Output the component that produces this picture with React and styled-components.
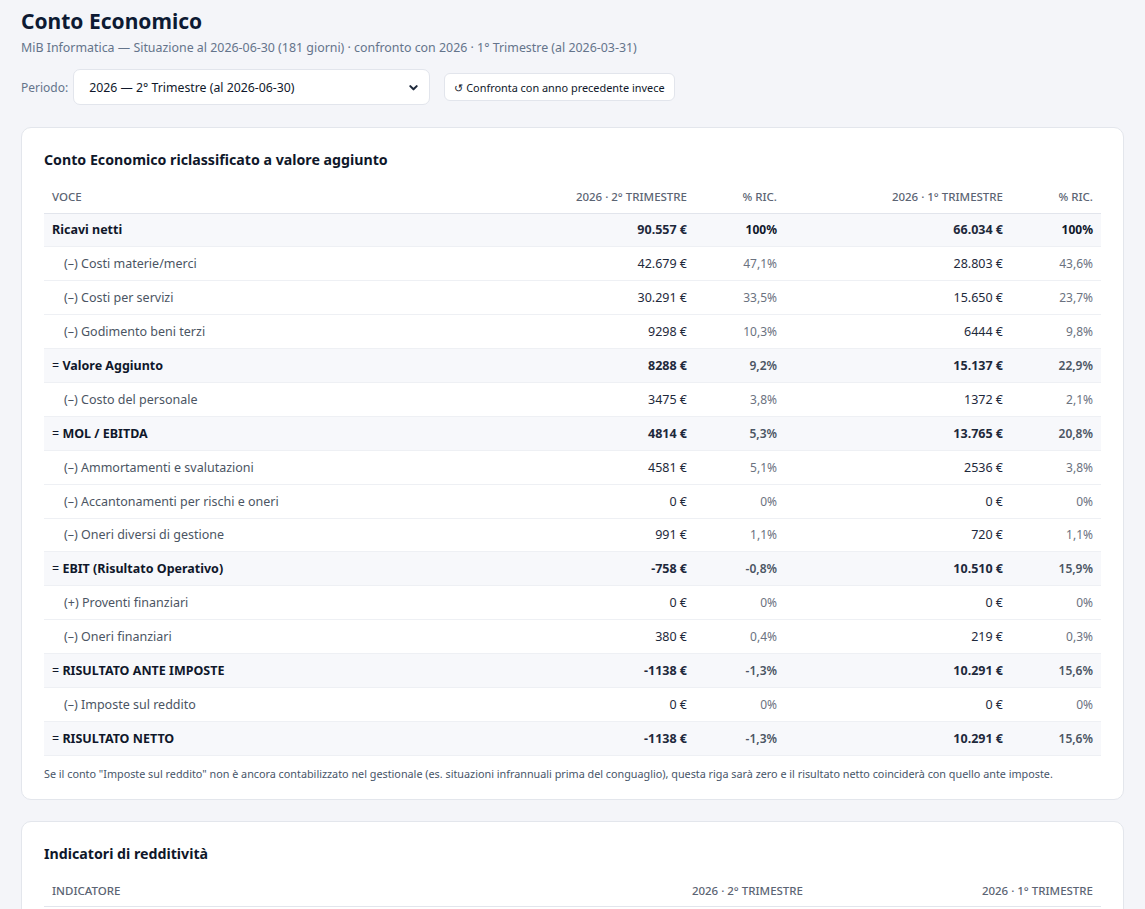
import React from "react";
import styled, { createGlobalStyle } from "styled-components";

const Global = createGlobalStyle`
  html, body { margin: 0; padding: 0; background: #f4f5f9; }
  body { font-family: "Noto Sans", "Open Sans", sans-serif; color: #0f172a; }
  * { box-sizing: border-box; }
`;

const Page = styled.div`
  padding: 6px 21px 20px 21px;
`;

const Title = styled.h1`
  margin: 0;
  font-size: 21px;
  font-weight: 700;
  color: #0d1a33;
  line-height: 30px;
`;

const Subtitle = styled.div`
  margin-top: 3px;
  font-size: 12.4px;
  color: #64748b;
  line-height: 18px;
`;

const Toolbar = styled.div`
  display: flex;
  align-items: center;
  gap: 5px;
  margin-top: 12px;
`;

const Label = styled.span`
  font-size: 12px;
  color: #64748b;
`;

const SelectBox = styled.div`
  width: 357px;
  height: 36px;
  border: 1px solid #e2e5ec;
  border-radius: 7px;
  background: #fff;
  display: flex;
  align-items: center;
  padding: 0 10px 0 15px;
  font-size: 12.3px;
  color: #0f172a;
  justify-content: space-between;
`;

const Button = styled.button`
  margin-left: 9px;
  height: 28px;
  padding: 0 9px;
  border: 1px solid #e2e5ec;
  border-radius: 6px;
  background: #fff;
  font-family: inherit;
  font-size: 10.9px;
  color: #0f172a;
  display: flex;
  align-items: center;
  gap: 3px;
`;

const Card = styled.section`
  margin-top: ${(p) => p.$mt || 22}px;
  background: #fff;
  border: 1px solid #e3e6ec;
  border-radius: 10px;
  padding: 21px 22px 17px 22px;
`;

const CardTitle = styled.h2`
  margin: 0 0 10px 0;
  font-size: 14.2px;
  font-weight: 700;
  color: #0f172a;
  line-height: 22px;
`;

const Table = styled.table`
  width: 100%;
  border-collapse: collapse;
  table-layout: fixed;
`;

const Th = styled.th`
  font-size: 11.5px;
  font-weight: 500;
  color: #5b6473;
  text-transform: uppercase;
  text-align: ${(p) => (p.$left ? "left" : "right")};
  padding: 0 8px;
  height: 32px;
  border-bottom: 1px solid #e2e5ec;
`;

const Tr = styled.tr`
  background: ${(p) => (p.$total ? "#f7f8fb" : "#fff")};
  & > td { border-bottom: 1px solid #eef0f4; }
`;

const TdLabel = styled.td`
  height: 33.9px;
  padding: 0 8px 0 ${(p) => (p.$indent ? 20 : 8)}px;
  font-size: 12.5px;
  color: ${(p) => (p.$total ? "#0f172a" : "#4b5563")};
  white-space: nowrap;
`;

const Strong = styled.strong`
  font-weight: 700;
  color: #0f172a;
`;

const TdVal = styled.td`
  padding: 0 8px;
  text-align: right;
  font-size: 12.5px;
  font-weight: ${(p) => (p.$total ? 700 : 400)};
  color: #1e293b;
  white-space: nowrap;
`;

const TdPct = styled.td`
  padding: 0 8px;
  text-align: right;
  font-size: 12px;
  font-weight: ${(p) => (p.$strong ? 700 : p.$total ? 600 : 400)};
  color: ${(p) => (p.$strong ? "#0f172a" : p.$total ? "#4b5563" : "#6b7280")};
  white-space: nowrap;
`;

const Note = styled.p`
  margin: 10px 0 0 0;
  font-size: 10.8px;
  color: #475569;
  line-height: 16px;
`;

const rows = [
  { l: "Ricavi netti", a: "90.557 €", ap: "100%", b: "66.034 €", bp: "100%", t: true, first: true },
  { l: "(–) Costi materie/merci", a: "42.679 €", ap: "47,1%", b: "28.803 €", bp: "43,6%" },
  { l: "(–) Costi per servizi", a: "30.291 €", ap: "33,5%", b: "15.650 €", bp: "23,7%" },
  { l: "(–) Godimento beni terzi", a: "9298 €", ap: "10,3%", b: "6444 €", bp: "9,8%" },
  { l: "Valore Aggiunto", a: "8288 €", ap: "9,2%", b: "15.137 €", bp: "22,9%", t: true },
  { l: "(–) Costo del personale", a: "3475 €", ap: "3,8%", b: "1372 €", bp: "2,1%" },
  { l: "MOL / EBITDA", a: "4814 €", ap: "5,3%", b: "13.765 €", bp: "20,8%", t: true },
  { l: "(–) Ammortamenti e svalutazioni", a: "4581 €", ap: "5,1%", b: "2536 €", bp: "3,8%" },
  { l: "(–) Accantonamenti per rischi e oneri", a: "0 €", ap: "0%", b: "0 €", bp: "0%" },
  { l: "(–) Oneri diversi di gestione", a: "991 €", ap: "1,1%", b: "720 €", bp: "1,1%" },
  { l: "EBIT (Risultato Operativo)", a: "-758 €", ap: "-0,8%", b: "10.510 €", bp: "15,9%", t: true },
  { l: "(+) Proventi finanziari", a: "0 €", ap: "0%", b: "0 €", bp: "0%" },
  { l: "(–) Oneri finanziari", a: "380 €", ap: "0,4%", b: "219 €", bp: "0,3%" },
  { l: "RISULTATO ANTE IMPOSTE", a: "-1138 €", ap: "-1,3%", b: "10.291 €", bp: "15,6%", t: true },
  { l: "(–) Imposte sul reddito", a: "0 €", ap: "0%", b: "0 €", bp: "0%" },
  { l: "RISULTATO NETTO", a: "-1138 €", ap: "-1,3%", b: "10.291 €", bp: "15,6%", t: true },
];

const Chevron = () => (
  <svg width="11" height="11" viewBox="0 0 24 24" fill="none" stroke="#1e293b" strokeWidth="4.5" strokeLinecap="round" strokeLinejoin="round">
    <path d="M5 9l7 7 7-7" />
  </svg>
);

export default function App() {
  return (
    <>
      <Global />
      <Page>
        <Title>Conto Economico</Title>
        <Subtitle>
          MiB Informatica — Situazione al 2026-06-30 (181 giorni) · confronto con 2026 · 1° Trimestre (al 2026-03-31)
        </Subtitle>
        <Toolbar>
          <Label>Periodo:</Label>
          <SelectBox>
            <span>2026 — 2° Trimestre (al 2026-06-30)</span>
            <Chevron />
          </SelectBox>
          <Button>
            <span>↺</span>
            <span>Confronta con anno precedente invece</span>
          </Button>
        </Toolbar>

        <Card $mt={22}>
          <CardTitle>Conto Economico riclassificato a valore aggiunto</CardTitle>
          <Table>
            <colgroup>
              <col />
              <col style={{ width: 226 }} />
              <col style={{ width: 90 }} />
              <col style={{ width: 226 }} />
              <col style={{ width: 90 }} />
            </colgroup>
            <thead>
              <tr>
                <Th $left>Voce</Th>
                <Th>2026 · 2° Trimestre</Th>
                <Th>% Ric.</Th>
                <Th>2026 · 1° Trimestre</Th>
                <Th>% Ric.</Th>
              </tr>
            </thead>
            <tbody>
              {rows.map((r) => (
                <Tr key={r.l} $total={r.t}>
                  <TdLabel $indent={!r.t} $total={r.t}>
                    {r.t ? (
                      r.first ? (
                        <Strong>{r.l}</Strong>
                      ) : (
                        <>
                          = <Strong>{r.l}</Strong>
                        </>
                      )
                    ) : (
                      r.l
                    )}
                  </TdLabel>
                  <TdVal $total={r.t}>{r.a}</TdVal>
                  <TdPct $total={r.t} $strong={r.first}>{r.ap}</TdPct>
                  <TdVal $total={r.t}>{r.b}</TdVal>
                  <TdPct $total={r.t} $strong={r.first}>{r.bp}</TdPct>
                </Tr>
              ))}
            </tbody>
          </Table>
          <Note>
            Se il conto "Imposte sul reddito" non è ancora contabilizzato nel gestionale (es. situazioni infrannuali prima del conguaglio), questa riga sarà zero e il risultato netto coinciderà con quello ante imposte.
          </Note>
        </Card>

        <Card $mt={21}>
          <CardTitle>Indicatori di redditività</CardTitle>
          <Table>
            <colgroup>
              <col />
              <col style={{ width: 290 }} />
              <col style={{ width: 290 }} />
            </colgroup>
            <thead>
              <tr>
                <Th $left>Indicatore</Th>
                <Th>2026 · 2° Trimestre</Th>
                <Th>2026 · 1° Trimestre</Th>
              </tr>
            </thead>
            <tbody>
              <Tr>
                <TdLabel $indent={false}>ROS (Return on Sales)</TdLabel>
                <TdVal>-0,8%</TdVal>
                <TdVal>15,9%</TdVal>
              </Tr>
            </tbody>
          </Table>
        </Card>
      </Page>
    </>
  );
}
